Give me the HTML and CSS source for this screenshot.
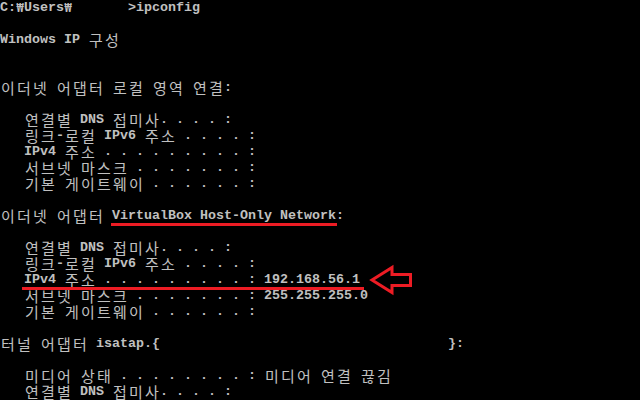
FILE: index.html
```html
<!DOCTYPE html>
<html lang="ko">
<head>
    <meta charset="UTF-8">
    <title>ipconfig</title>
    <link rel="stylesheet" href="styles.css">
</head>
<body>
<div class="console">
    <div class="line">C:<b>₩</b>Users<b>₩</b>       &gt;ipconfig</div>
    <div class="line"></div>
    <div class="line">Windows IP <i>구</i><i>성</i></div>
    <div class="line"></div>
    <div class="line"></div>
    <div class="line"><i>이</i><i>더</i><i>넷</i> <i>어</i><i>댑</i><i>터</i> <i>로</i><i>컬</i> <i>영</i><i>역</i> <i>연</i><i>결</i>:</div>
    <div class="line"></div>
    <div class="line">   <i>연</i><i>결</i><i>별</i> DNS <i>접</i><i>미</i><i>사</i>. . . . :</div>
    <div class="line">   <i>링</i><i>크</i>-<i>로</i><i>컬</i> IPv6 <i>주</i><i>소</i> . . . . :</div>
    <div class="line">   IPv4 <i>주</i><i>소</i> . . . . . . . . . :</div>
    <div class="line">   <i>서</i><i>브</i><i>넷</i> <i>마</i><i>스</i><i>크</i> . . . . . . . :</div>
    <div class="line">   <i>기</i><i>본</i> <i>게</i><i>이</i><i>트</i><i>웨</i><i>이</i> . . . . . . :</div>
    <div class="line"></div>
    <div class="line"><i>이</i><i>더</i><i>넷</i> <i>어</i><i>댑</i><i>터</i> VirtualBox Host-Only Network:</div>
    <div class="line"></div>
    <div class="line">   <i>연</i><i>결</i><i>별</i> DNS <i>접</i><i>미</i><i>사</i>. . . . :</div>
    <div class="line">   <i>링</i><i>크</i>-<i>로</i><i>컬</i> IPv6 <i>주</i><i>소</i> . . . . :</div>
    <div class="line">   IPv4 <i>주</i><i>소</i> . . . . . . . . . : 192.168.56.1</div>
    <div class="line">   <i>서</i><i>브</i><i>넷</i> <i>마</i><i>스</i><i>크</i> . . . . . . . : 255.255.255.0</div>
    <div class="line">   <i>기</i><i>본</i> <i>게</i><i>이</i><i>트</i><i>웨</i><i>이</i> . . . . . . :</div>
    <div class="line"></div>
    <div class="line"><i>터</i><i>널</i> <i>어</i><i>댑</i><i>터</i> isatap.{                                    }:</div>
    <div class="line"></div>
    <div class="line">   <i>미</i><i>디</i><i>어</i> <i>상</i><i>태</i> . . . . . . . . : <i>미</i><i>디</i><i>어</i> <i>연</i><i>결</i> <i>끊</i><i>김</i></div>
    <div class="line">   <i>연</i><i>결</i><i>별</i> DNS <i>접</i><i>미</i><i>사</i>. . . . :</div>

    <!-- annotations -->
    <div class="mark mark--adapter"></div>
    <div class="mark mark--ipv4"></div>
    <svg class="arrow" width="640" height="400" viewBox="0 0 640 400">
        <polygon points="372,280 392,267.5 392,274.5 410.5,274.5 410.5,285.5 392,285.5 392,292.5" fill="none" stroke="#ed1c24" stroke-width="3" stroke-linejoin="miter"/>
    </svg>
</div>
</body>
</html>
```

FILE: styles.css
```css
* {
    margin: 0;
    padding: 0;
}

body {
    background: #000;
}

.console {
    --text: #c0c0c0;
    --mark: #ed1c24;
    position: relative;
    width: 640px;
    height: 400px;
    overflow: hidden;
    background: #000;
    color: var(--text);
    font-family: "Liberation Mono", "DejaVu Sans Mono", monospace;
    font-size: 13.333px;
    font-weight: bold;
}

.line {
    height: 16px;
    line-height: 16px;
    white-space: pre;
}

/* hangul - double width console cells */
.line i {
    display: inline-block;
    width: 16px;
    height: 16px;
    vertical-align: top;
    text-align: center;
    font-style: normal;
    font-weight: normal;
    font-family: "Noto Sans CJK KR", sans-serif;
    font-size: 15px;
    line-height: 16px;
}

/* won sign in place of backslash - single cell */
.line b {
    display: inline-block;
    width: 8px;
    vertical-align: top;
    text-align: center;
    font-family: "DejaVu Sans Mono", monospace;
    font-size: 12px;
}

/* red annotation */
.mark {
    position: absolute;
    height: 3px;
    background: var(--mark);
}

.mark--adapter {
    left: 111px;
    top: 223px;
    width: 226px;
}

.mark--ipv4 {
    left: 22px;
    top: 287px;
    width: 342px;
}

.arrow {
    position: absolute;
    left: 0;
    top: 0;
}
```
